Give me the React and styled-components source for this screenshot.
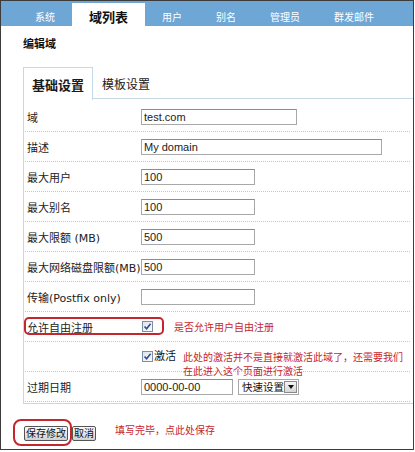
import React from 'react'
import { styled, createGlobalStyle } from 'styled-components'

const GlobalStyle = createGlobalStyle`
  html, body {
    margin: 0;
    padding: 0;
    background: #fff;
  }
  body {
    font-family: "DejaVu Sans", "Noto Sans CJK SC", sans-serif;
    color: #222;
  }
`

const RED = '#c4262e'

const rows = [
  { label: '域', value: 'test.com', width: 156 },
  { label: '描述', value: 'My domain', width: 241 },
  { label: '最大用户', value: '100', width: 114 },
  { label: '最大别名', value: '100', width: 114 },
  { label: '最大限额 (MB)', value: '500', width: 114 },
  { label: '最大网络磁盘限额(MB)', value: '500', width: 114 },
  { label: '传输(Postfix only)', value: '', width: 114 },
]

const navItems = ['系统', '域列表', '用户', '别名', '管理员', '群发邮件']

function Check() {
  return (
    <CheckBox>
      <svg width="9" height="9" viewBox="0 0 9 9">
        <path d="M1.5 4.5 L3.6 6.8 L7.6 1.8" fill="none" stroke="#2b4f96" strokeWidth="1.6" />
      </svg>
    </CheckBox>
  )
}

export default function App() {
  return (
    <>
      <GlobalStyle />
      <Frame>
        <NavBar>
          {navItems.map((n) => (
            <NavTab key={n} $active={n === '域列表'}>{n}</NavTab>
          ))}
        </NavBar>

        <Heading>编辑域</Heading>

        <TabStrip>
          <Tab $active>基础设置</Tab>
          <Tab>模板设置</Tab>
        </TabStrip>

        <Panel>
          {rows.map((r, i) => (
            <Row key={r.label} $first={i === 0}>
              <Label>{r.label}</Label>
              <Value>
                <TextInput style={{ width: r.width }} defaultValue={r.value} readOnly />
              </Value>
            </Row>
          ))}

          <Row>
            <Outline />
            <Label>允许自由注册</Label>
            <Value>
              <Check />
              <Note $gap={21}>是否允许用户自由注册</Note>
            </Value>
          </Row>

          <Row>
            <Label />
            <Value>
              <Check />
              <CheckText>激活</CheckText>
              <Note $gap={7} $tall>
                此处的激活并不是直接就激活此域了，还需要我们
                <br />
                在此进入这个页面进行激活
              </Note>
            </Value>
          </Row>

          <Row>
            <Label>过期日期</Label>
            <Value>
              <TextInput style={{ width: 92 }} defaultValue="0000-00-00" readOnly />
              <QuickSelect>
                快速设置
                <DropButton />
              </QuickSelect>
            </Value>
          </Row>
        </Panel>

        <Footer>
          <SaveWrap>
            <Button>保存修改</Button>
            <Oval />
          </SaveWrap>
          <Button>取消</Button>
          <FooterNote>填写完毕，点此处保存</FooterNote>
        </Footer>
      </Frame>
    </>
  )
}

const Frame = styled.div`
  width: 414px;
  height: 450px;
  box-sizing: border-box;
  border: 1px solid #3c3c3c;
  background: #fff;
  overflow: hidden;
`

const NavBar = styled.div`
  display: flex;
  align-items: flex-end;
  height: 25px;
  padding-left: 17px;
  background: #6ea6d5;
`

const NavTab = styled.div`
  padding: ${(p) => (p.$active ? '7px' : '0')} 17px 2px;
  line-height: 14px;
  font-family: "Noto Sans CJK SC", sans-serif;
  font-size: ${(p) => (p.$active ? '13px' : '10px')};
  font-weight: ${(p) => (p.$active ? 'bold' : 'normal')};
  color: ${(p) => (p.$active ? '#111' : '#fff')};
  background: ${(p) => (p.$active ? '#fff' : 'transparent')};
`

const Heading = styled.div`
  padding: 11px 0 0 22px;
  line-height: 12px;
  font-family: "Noto Sans CJK SC", sans-serif;
  font-size: 11px;
  font-weight: bold;
  color: #111;
`

const TabStrip = styled.div`
  display: flex;
  height: 32px;
  margin: 18px 0 0 22px;
  position: relative;
  z-index: 1;
`

const Tab = styled.div`
  display: flex;
  align-items: center;
  box-sizing: border-box;
  padding: 0 8px;
  font-family: "Noto Sans CJK SC", sans-serif;
  font-size: ${(p) => (p.$active ? '13px' : '12px')};
  font-weight: ${(p) => (p.$active ? 'bold' : 'normal')};
  color: #1a1a1a;
  background: ${(p) => (p.$active ? '#fff' : 'transparent')};
  border: 1px solid ${(p) => (p.$active ? '#c3d9e8' : 'transparent')};
  border-bottom: none;
  height: ${(p) => (p.$active ? '33px' : '32px')};
`

const Panel = styled.div`
  margin: -1px 0 0 22px;
  border: 1px solid #c3d9e8;
  border-right: none;
  padding: 0 3px 1px 1px;
`

const Row = styled.div`
  position: relative;
  display: grid;
  grid-template-columns: 116px 1fr;
  align-items: center;
  height: 29px;
  padding-top: ${(p) => (p.$first ? '3px' : '0')};
  border-bottom: 1px dotted #c6c6c6;
`

const Label = styled.div`
  padding-left: 2px;
  font-size: 11px;
  white-space: nowrap;
  color: #222;
`

const Value = styled.div`
  display: flex;
  align-items: center;
`

const TextInput = styled.input`
  box-sizing: border-box;
  height: 16px;
  margin: 0;
  padding: 0 2px;
  border: 1px solid #a8a8a8;
  border-top-color: #8c8c8c;
  font-family: "Liberation Sans", Arial, sans-serif;
  font-size: 11px;
  color: #222;
  outline: none;
`

const CheckBox = styled.span`
  display: inline-flex;
  align-items: center;
  justify-content: center;
  box-sizing: border-box;
  width: 11px;
  height: 11px;
  margin-left: 1px;
  border: 1px solid #7d8fa3;
  background: linear-gradient(135deg, #dfe3ea, #fbfbfd);
`

const CheckText = styled.span`
  margin-left: 1px;
  font-size: 11px;
  line-height: 14px;
  color: #111;
`

const Note = styled.span`
  margin-left: ${(p) => p.$gap}px;
  font-family: "Noto Sans CJK SC", sans-serif;
  font-size: 10px;
  line-height: 14px;
  height: 14px;
  color: ${RED};
  white-space: nowrap;
`

const Outline = styled.div`
  position: absolute;
  left: -1px;
  top: 5px;
  width: 140px;
  height: 18px;
  box-sizing: border-box;
  border: 2px solid ${RED};
  border-radius: 5px;
  pointer-events: none;
`

const QuickSelect = styled.div`
  display: flex;
  align-items: center;
  justify-content: space-between;
  box-sizing: border-box;
  width: 61px;
  height: 16px;
  margin-left: 5px;
  padding: 0 1px 0 3px;
  border: 1px solid #a8a8a8;
  font-family: "Noto Sans CJK SC", sans-serif;
  font-size: 10.5px;
  color: #111;
`

const DropButton = styled.span`
  position: relative;
  box-sizing: border-box;
  width: 13px;
  height: 12px;
  border: 1px solid #8a8a8a;
  background: linear-gradient(#f4f4f4, #d6d6d6);

  &::after {
    content: "";
    position: absolute;
    left: 3px;
    top: 3px;
    border-left: 3px solid transparent;
    border-right: 3px solid transparent;
    border-top: 4px solid #111;
  }
`

const Footer = styled.div`
  display: flex;
  align-items: center;
  margin-top: 19px;
  padding-left: 23px;
`

const SaveWrap = styled.div`
  position: relative;
  display: inline-flex;
  margin-right: 4px;
`

const Button = styled.button`
  box-sizing: border-box;
  height: 15px;
  margin: 0;
  padding: 0 1px;
  border: 1px solid #555;
  border-radius: 2px;
  background: linear-gradient(#fbfbfb, #d2d2d2);
  font-family: "Noto Sans CJK SC", sans-serif;
  font-size: 10px;
  line-height: 12px;
  color: #111;
`

const Oval = styled.div`
  position: absolute;
  left: -11px;
  top: -7px;
  width: 59px;
  height: 27px;
  box-sizing: border-box;
  border: 2px solid ${RED};
  border-radius: 8px;
  pointer-events: none;
`

const FooterNote = styled.span`
  margin: 0 0 6px 19px;
  font-family: "Noto Sans CJK SC", sans-serif;
  font-size: 10px;
  line-height: 14px;
  color: ${RED};
`
